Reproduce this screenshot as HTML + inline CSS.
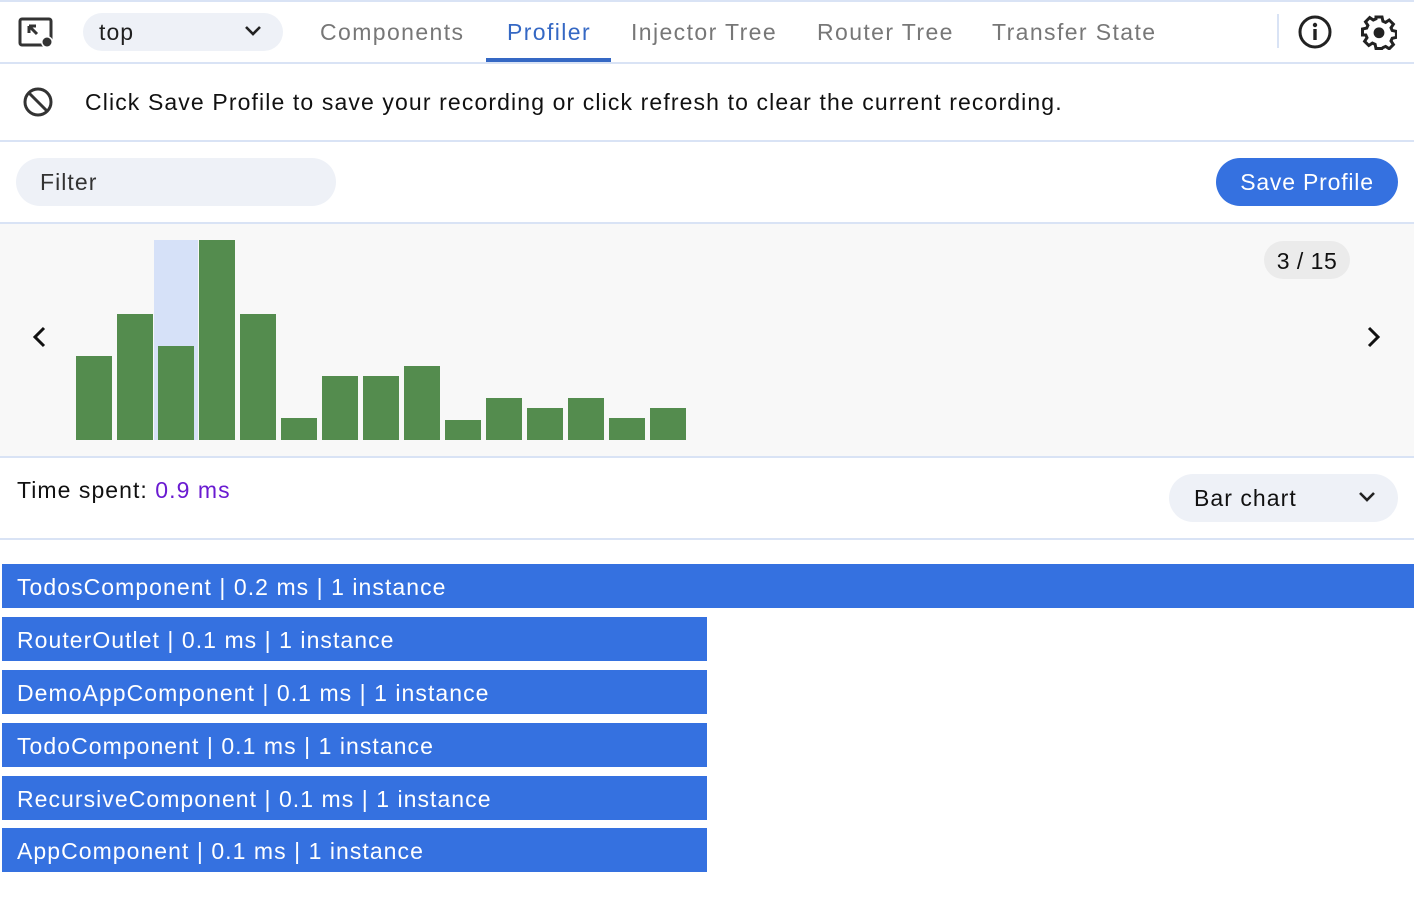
<!DOCTYPE html>
<html><head><meta charset="utf-8"><style>
body{margin:0;width:1414px;height:924px;background:#fff;font-family:"Liberation Sans",Helvetica,sans-serif;position:relative;overflow:hidden;color:#1f1f1f;letter-spacing:1.05px}
.a{position:absolute}
.hl{position:absolute;left:0;width:1414px;height:2px;background:#d9e3f5}
.tab{position:absolute;top:19px;font-size:23px;color:#777;letter-spacing:1.4px}
.bar{position:absolute;width:36px;background:#548c4e;bottom:484px}
.row{position:absolute;left:2px;height:44px;background:#3571e0;color:#fff;font-size:23px;line-height:46px;padding-left:15px;box-sizing:border-box}
</style></head><body>
<div class="hl" style="top:0"></div>
<svg class="a" style="left:18px;top:17px" width="36" height="32" viewBox="0 0 36 32"><rect x="2" y="2" width="31" height="26" rx="2" fill="none" stroke="#333" stroke-width="3"/><path d="M11 9h7M11 9v7M11 9l8 8" stroke="#333" stroke-width="3" fill="none"/><circle cx="29" cy="25" r="6" fill="#fff"/><circle cx="29" cy="25" r="4.5" fill="#333"/></svg>
<div class="a" style="left:83px;top:13px;width:200px;height:38px;border-radius:19px;background:#eef1f7"></div>
<div class="a" style="left:99px;top:19px;font-size:23px">top</div>
<svg class="a" style="left:243px;top:24px" width="20" height="14"><path d="M3 3l7 7 7-7" stroke="#222" stroke-width="2.6" fill="none"/></svg>
<div class="tab" style="left:320px">Components</div>
<div class="tab" style="left:507px;color:#3568c4">Profiler</div>
<div class="a" style="left:486px;top:58px;width:125px;height:4px;background:#3568c4"></div>
<div class="tab" style="left:631px">Injector Tree</div>
<div class="tab" style="left:817px">Router Tree</div>
<div class="tab" style="left:992px">Transfer State</div>
<div class="a" style="left:1277px;top:14px;width:2px;height:34px;background:#d9e3f5"></div>
<svg class="a" style="left:1297px;top:15px" width="36" height="36"><circle cx="18" cy="17" r="15" fill="none" stroke="#222" stroke-width="3"/><circle cx="18" cy="10" r="2.2" fill="#222"/><rect x="16.3" y="14" width="3.4" height="11" fill="#222"/></svg>
<svg class="a" style="left:1361px;top:14px" width="36" height="36" viewBox="0 0 24 24"><path fill="none" stroke="#222" stroke-width="2" d="M10 2h4l.6 2.8 1.8.8 2.4-1.6 2.8 2.8-1.6 2.4.8 1.8 2.8.6v4l-2.8.6-.8 1.8 1.6 2.4-2.8 2.8-2.4-1.6-1.8.8L14 23h-4l-.6-2.8-1.8-.8-2.4 1.6-2.8-2.8 1.6-2.4-.8-1.8L1 14v-4l2.8-.6.8-1.8L3 5.2 5.8 2.4l2.4 1.6 1.8-.8z"/><circle cx="12" cy="12.5" r="3.6" fill="#222"/></svg>
<div class="hl" style="top:62px"></div>
<svg class="a" style="left:22px;top:86px" width="32" height="32"><circle cx="16" cy="16" r="13" fill="none" stroke="#333" stroke-width="3"/><path d="M7 7l18 18" stroke="#333" stroke-width="3"/></svg>
<div class="a" style="left:85px;top:89px;font-size:23px;color:#111;letter-spacing:1.12px">Click Save Profile to save your recording or click refresh to clear the current recording.</div>
<div class="hl" style="top:140px"></div>
<div class="a" style="left:16px;top:158px;width:320px;height:48px;border-radius:24px;background:#eef1f7"></div>
<div class="a" style="left:40px;top:169px;font-size:23px;color:#333">Filter</div>
<div class="a" style="left:1216px;top:158px;width:182px;height:48px;border-radius:24px;background:#3571e0;color:#fff;font-size:23px;line-height:49px;text-align:center;letter-spacing:0.8px">Save Profile</div>
<div class="hl" style="top:222px"></div>
<div class="a" style="left:0;top:224px;width:1414px;height:232px;background:#f8f8f8"></div>
<div class="hl" style="top:456px"></div>
<div class="a" style="left:154px;top:240px;width:44px;height:200px;background:#d6e1f8"></div>
<div class="bar" style="left:76px;height:84px"></div>
<div class="bar" style="left:117px;height:126px"></div>
<div class="bar" style="left:158px;height:94px"></div>
<div class="bar" style="left:199px;height:200px"></div>
<div class="bar" style="left:240px;height:126px"></div>
<div class="bar" style="left:281px;height:22px"></div>
<div class="bar" style="left:322px;height:64px"></div>
<div class="bar" style="left:363px;height:64px"></div>
<div class="bar" style="left:404px;height:74px"></div>
<div class="bar" style="left:445px;height:20px"></div>
<div class="bar" style="left:486px;height:42px"></div>
<div class="bar" style="left:527px;height:32px"></div>
<div class="bar" style="left:568px;height:42px"></div>
<div class="bar" style="left:609px;height:22px"></div>
<div class="bar" style="left:650px;height:32px"></div>
<svg class="a" style="left:30px;top:325px" width="20" height="24"><path d="M14 3l-9 9 9 9" stroke="#111" stroke-width="3" fill="none"/></svg>
<svg class="a" style="left:1363px;top:325px" width="20" height="24"><path d="M6 3l9 9-9 9" stroke="#111" stroke-width="3" fill="none"/></svg>
<div class="a" style="left:1264px;top:241px;width:86px;height:38px;border-radius:19px;background:#ebebeb;font-size:23px;line-height:40px;text-align:center;color:#111;letter-spacing:0.5px">3 / 15</div>
<div class="a" style="left:17px;top:477px;font-size:23px;color:#111">Time spent: <span style="color:#6a1bd1">0.9 ms</span></div>
<div class="a" style="left:1169px;top:474px;width:229px;height:48px;border-radius:24px;background:#eef1f7"></div>
<div class="a" style="left:1194px;top:485px;font-size:23px;color:#111">Bar chart</div>
<svg class="a" style="left:1357px;top:490px" width="20" height="14"><path d="M3 3l7 7 7-7" stroke="#222" stroke-width="2.6" fill="none"/></svg>
<div class="hl" style="top:538px"></div>
<div class="row" style="top:564px;width:1412px">TodosComponent | 0.2 ms | 1 instance</div>
<div class="row" style="top:617px;width:705px">RouterOutlet | 0.1 ms | 1 instance</div>
<div class="row" style="top:670px;width:705px">DemoAppComponent | 0.1 ms | 1 instance</div>
<div class="row" style="top:723px;width:705px">TodoComponent | 0.1 ms | 1 instance</div>
<div class="row" style="top:776px;width:705px">RecursiveComponent | 0.1 ms | 1 instance</div>
<div class="row" style="top:828px;width:705px">AppComponent | 0.1 ms | 1 instance</div>
</body></html>
